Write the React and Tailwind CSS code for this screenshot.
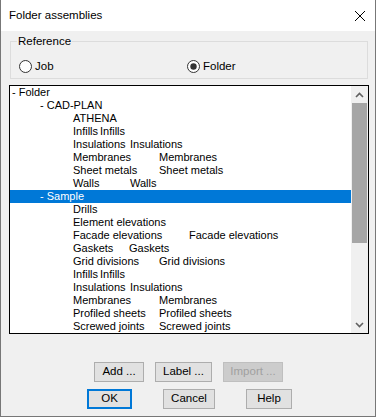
import React from "react";

const F = { fontFamily: '"Liberation Sans", Arial, sans-serif' };

function Row({ indent, a, w, b, selected }) {
  return (
    <div
      className={`flex h-[13px] leading-[13px] text-[11px] whitespace-nowrap ${selected ? "bg-[#0078d7] text-white" : "text-black"}`}
      style={{ paddingLeft: indent }}
    >
      {b ? (
        <>
          <span className="inline-block shrink-0" style={{ width: w }}>{a}</span>
          <span>{b}</span>
        </>
      ) : (
        <span>{a}</span>
      )}
    </div>
  );
}

const rows = [
  { indent: 2, a: "- Folder" },
  { indent: 30, a: "- CAD-PLAN" },
  { indent: 63, a: "ATHENA" },
  { indent: 63, a: "Infills", w: 27, b: "Infills" },
  { indent: 63, a: "Insulations", w: 57, b: "Insulations" },
  { indent: 63, a: "Membranes", w: 86, b: "Membranes" },
  { indent: 63, a: "Sheet metals", w: 86, b: "Sheet metals" },
  { indent: 63, a: "Walls", w: 57, b: "Walls" },
  { indent: 30, a: "- Sample", selected: true },
  { indent: 63, a: "Drills" },
  { indent: 63, a: "Element elevations" },
  { indent: 63, a: "Facade elevations", w: 116, b: "Facade elevations" },
  { indent: 63, a: "Gaskets", w: 56, b: "Gaskets" },
  { indent: 63, a: "Grid divisions", w: 86, b: "Grid divisions" },
  { indent: 63, a: "Infills", w: 27, b: "Infills" },
  { indent: 63, a: "Insulations", w: 57, b: "Insulations" },
  { indent: 63, a: "Membranes", w: 86, b: "Membranes" },
  { indent: 63, a: "Profiled sheets", w: 86, b: "Profiled sheets" },
  { indent: 63, a: "Screwed joints", w: 86, b: "Screwed joints" },
];

function Btn({ children, w, disabled, def }) {
  return (
    <div
      className={`flex h-[20px] items-center justify-center text-[11.5px] leading-none ${
        disabled
          ? "bg-[#cccccc] border border-[#bfbfbf] text-[#a0a0a0]"
          : def
          ? "bg-[#e1e1e1] border-2 border-[#0078d7] text-black"
          : "bg-[#e1e1e1] border border-[#adadad] text-black"
      }`}
      style={{ width: w }}
    >
      {children}
    </div>
  );
}

function Radio({ checked }) {
  return (
    <svg width="13" height="13" viewBox="0 0 13 13" className="shrink-0">
      <circle cx="6.5" cy="6.5" r="6" fill="#fff" stroke="#333" strokeWidth="1" />
      {checked && <circle cx="6.5" cy="6.5" r="3.2" fill="#333" />}
    </svg>
  );
}

export default function App() {
  return (
    <div
      className="w-[376px] h-[417px] flex flex-col bg-[#f0f0f0] border-l border-r border-b border-[#777777] text-[11.5px]"
      style={F}
    >
      <div className="h-[31px] bg-white flex items-center justify-between pl-[8px] pr-[9px] shrink-0">
        <span className="text-[11.5px] text-black">Folder assemblies</span>
        <svg width="12" height="12" viewBox="0 0 12 12">
          <path d="M1 1 L11 11 M11 1 L1 11" stroke="#000" strokeWidth="1" />
        </svg>
      </div>

      <div className="flex flex-col pl-[8px] pr-[6px]">
        <div className="mt-[10px] mx-[1px] border border-[#dcdcdc] h-[38px] flex flex-col px-[6px]">
          <span className="-mt-[8px] w-fit px-[1px] leading-[14px] bg-[#f0f0f0] text-black">Reference</span>
          <div className="flex items-center mt-[11px] ml-[2px] h-[14px]">
            <div className="flex items-center w-[168px]">
              <Radio />
              <span className="ml-[3px] leading-[14px]">Job</span>
            </div>
            <div className="flex items-center">
              <Radio checked />
              <span className="ml-[3px] leading-[14px]">Folder</span>
            </div>
          </div>
        </div>

        <div className="mt-[6px] h-[249px] border border-[#000] bg-white flex overflow-hidden">
          <div className="flex-1 flex flex-col overflow-hidden">
            {rows.map((r, i) => (
              <Row key={i} {...r} />
            ))}
          </div>
          <div className="w-[17px] bg-[#f0f0f0] flex flex-col shrink-0">
            <div className="h-[17px] flex items-center justify-center">
              <svg width="9" height="6" viewBox="0 0 9 6">
                <path d="M1 5 L4.5 1.5 L8 5" stroke="#606060" strokeWidth="1.6" fill="none" />
              </svg>
            </div>
            <div className="h-[140px] bg-[#a6a6a6] mx-[1px]" />
            <div className="flex-1" />
            <div className="h-[17px] flex items-center justify-center">
              <svg width="9" height="6" viewBox="0 0 9 6">
                <path d="M1 1 L4.5 4.5 L8 1" stroke="#606060" strokeWidth="1.6" fill="none" />
              </svg>
            </div>
          </div>
        </div>

        <div className="flex mt-[28px] pl-[85px] gap-[11px]">
          <Btn w={50}>Add ...</Btn>
          <Btn w={57}>Label ...</Btn>
          <Btn w={60} disabled>Import ...</Btn>
        </div>
        <div className="flex mt-[7px] pl-[78px] gap-[31px]">
          <Btn w={45} def>OK</Btn>
          <Btn w={52}>Cancel</Btn>
          <Btn w={46}>Help</Btn>
        </div>
      </div>
    </div>
  );
}
